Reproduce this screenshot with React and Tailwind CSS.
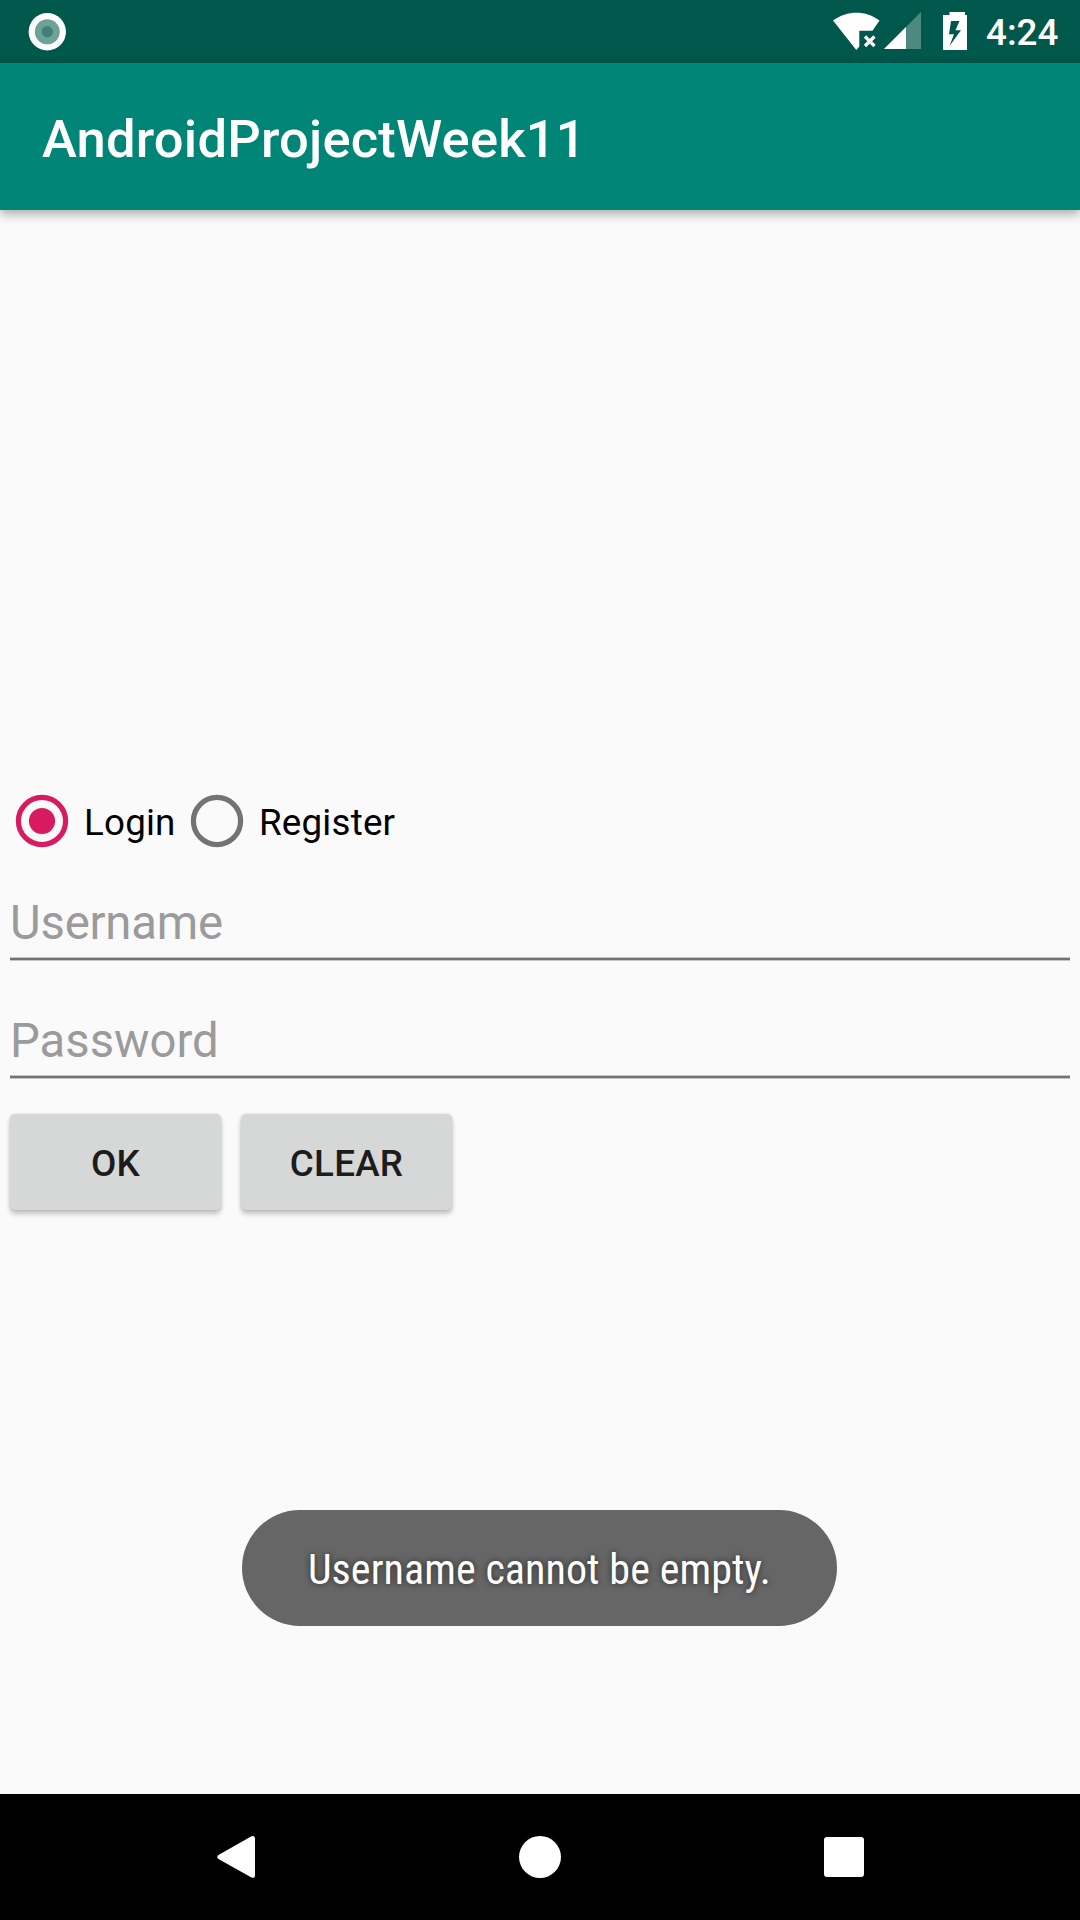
function StatusBar() {
  return (
    <header className="flex h-[63px] items-center bg-[#00574b] pl-[28px] pr-[20px]">
      <svg className="h-[38px] w-[38px]" viewBox="0 0 38 38">
        <circle cx="19.3" cy="18.8" r="18.7" fill="#fff" />
        <circle cx="19.3" cy="18.8" r="12.5" fill="#6da199" />
        <circle cx="19.3" cy="18.8" r="5.7" fill="#408177" />
      </svg>
      <svg className="ml-auto h-[63px] w-[150px]" viewBox="0 0 150 63">
        <path d="M3 20.500C17 10 36 10 49.500 20.500L42.500 30.700H29.300V46.500L26.300 50Z" fill="#fff" />
        <path d="M35 36.500L44.500 46M44.500 36.500L35 46" stroke="#fff" strokeWidth="3.200" />
        <path d="M91 12V49H54Z" fill="#4d897f" />
        <path d="M76 27V49H54Z" fill="#fff" />
        <path fillRule="evenodd" d="M119.500 12h11v0h4.500v3h2v35h-24v-35h6.500ZM121 21L119 34.200H124L119.500 46L131 30.300H125.500L129.500 21Z" fill="#fff" />
      </svg>
      <span className="ml-[6px] w-[74px] text-[36.75px] font-medium leading-[63px] text-white">
        <span className="relative top-[1px]">4:24</span>
      </span>
    </header>
  );
}

function RadioOption({ label, checked, className }) {
  const color = checked ? "#d81b60" : "#737373";
  return (
    <label className={`flex h-[84px] items-center ${className}`}>
      <svg className="h-[84px] w-[84px] shrink-0" viewBox="0 0 84 84">
        <circle cx="42" cy="42" r="23.6" fill="none" stroke={color} strokeWidth="5.2" />
        {checked && <circle cx="42" cy="42" r="13.100" fill={color} />}
      </svg>
      <span className="pt-[4px] text-[36.75px] leading-[44px] tracking-[0.2px] text-black">{label}</span>
    </label>
  );
}

function Field({ label, className }) {
  return (
    <div className="h-[118px] px-[10px] pt-[32px]">
      <div className="h-[62px]">
        <span className={`block text-[47.25px] leading-[56px] text-[#9b9b9b] ${className}`}>{label}</span>
      </div>
      <div className="h-[4px] border-y border-[#c4c4c4] bg-[#737373]" />
    </div>
  );
}

function Button({ children }) {
  return (
    <button className="h-[96px] w-[211px] rounded-[5px] bg-[#d6d7d7] pt-[4px] text-[36.75px] font-medium tracking-[0.3px] text-[#1c1c1c] shadow-[0_4px_5px_rgba(0,0,0,0.22),0_0_3px_rgba(0,0,0,0.12)]">
      {children}
    </button>
  );
}

export default function App() {
  return (
    <div className="relative flex h-[1920px] w-[1080px] flex-col overflow-hidden bg-[#fafafa] font-['Roboto',sans-serif]">
      <StatusBar />
      <div className="flex h-[147px] items-center bg-[#008577] pl-[42px] shadow-[0_4px_10px_rgba(0,0,0,0.32)]">
        <h1 className="pt-[4px] text-[52.5px] font-medium leading-[62px] tracking-[0.2px] text-white">AndroidProjectWeek11</h1>
      </div>
      <main className="flex flex-1 flex-col pt-[569px]">
        <div className="flex">
          <RadioOption label="Login" checked className="w-[175px]" />
          <RadioOption label="Register" className="" />
        </div>
        <Field label="Username" className="tracking-[-0.2px]" />
        <Field label="Password" className="" />
        <div className="flex gap-[20px] pl-[10px] pt-[15px]">
          <Button>OK</Button>
          <Button>CLEAR</Button>
        </div>
      </main>
      <div className="absolute left-[242px] top-[1510px] flex h-[116px] w-[595px] items-center justify-center rounded-full bg-[#666]">
        <span className="whitespace-nowrap pt-[3px] text-[42px] tracking-[0.09px] text-white [font-family:'Roboto_Condensed','Roboto',sans-serif] [font-stretch:75%] [text-shadow:0_0_6px_rgba(0,0,0,0.6)]">
          Username cannot be empty.
        </span>
      </div>
      <nav className="flex h-[126px] items-center bg-black pl-[217px]">
        <svg className="h-[42px] w-[38px]" viewBox="0 0 38 42">
          <path d="M34 .4Q38-1 38 3V39Q38 43 34 41.300L1.500 23Q-1 21 1.500 19Z" fill="#fff" />
        </svg>
        <div className="ml-[264px] h-[42px] w-[42px] rounded-full bg-white" />
        <div className="ml-[263px] h-[40px] w-[40px] rounded-[3px] bg-white" />
      </nav>
    </div>
  );
}
